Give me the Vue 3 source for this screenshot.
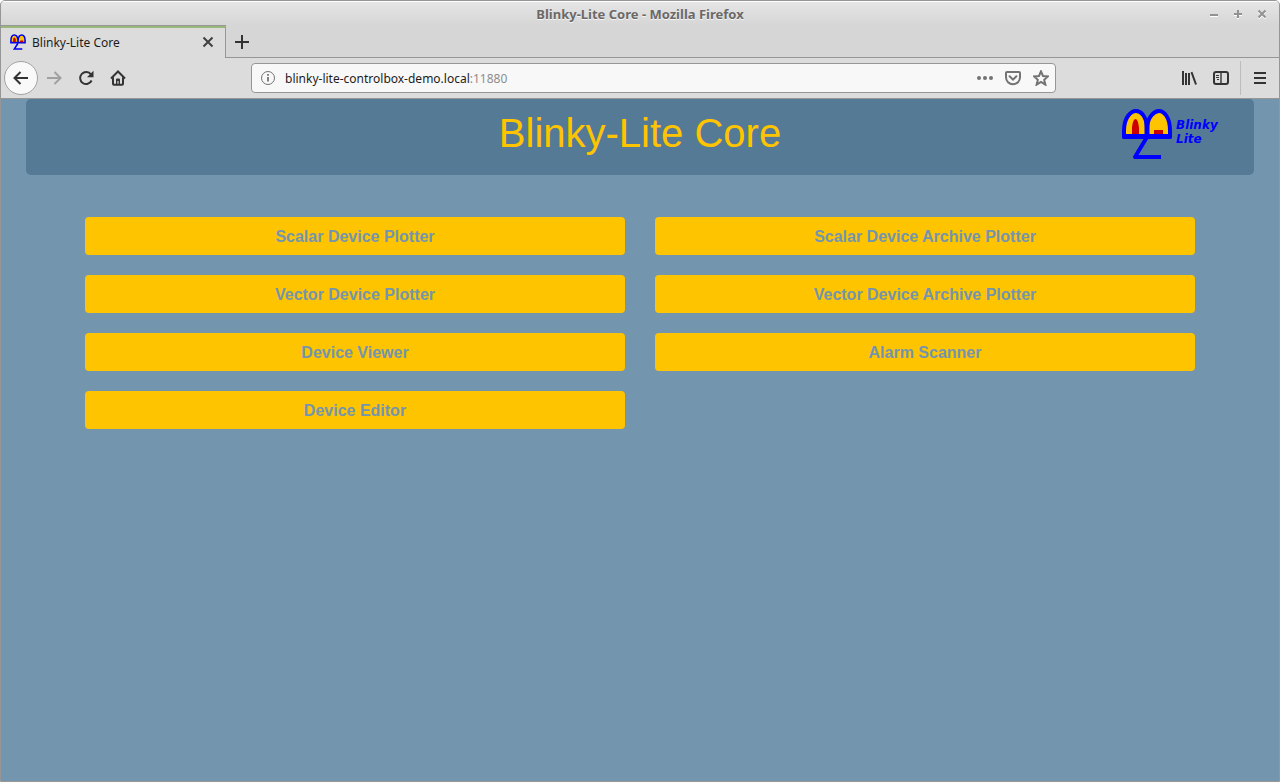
<script setup>
const tools = [
  'Scalar Device Plotter',
  'Scalar Device Archive Plotter',
  'Vector Device Plotter',
  'Vector Device Archive Plotter',
  'Device Viewer',
  'Alarm Scanner',
  'Device Editor',
]
</script>

<template>
  <div class="window">
    <div class="frame-top">
      <header class="titlebar">
        <span class="title">Blinky-Lite Core - Mozilla Firefox</span>
        <div class="window-controls">
          <button aria-label="Minimize"><svg width="10" height="10" viewBox="0 0 10 10"><path d="M1 6h8" /></svg></button>
          <button aria-label="Maximize"><svg width="10" height="10" viewBox="0 0 10 10"><path d="M1 5h8M5 1v8" /></svg></button>
          <button aria-label="Close window"><svg width="10" height="10" viewBox="0 0 10 10"><path d="M1.500 1.500l7 7M8.500 1.500l-7 7" /></svg></button>
        </div>
      </header>
      <div class="tabs">
        <div class="tab">
          <svg class="favicon" width="16" height="16" viewBox="0 0 52 52">
            <path d="M3 28V22C3 8 9 3 14 3s11 5 12 18C27 8 33 3 38 3s11 6 11 19v6z" fill="#ffc400" stroke="#0000f0" stroke-width="5" />
            <path d="M26 14v14" stroke="#0000f0" stroke-width="5" />
            <path d="M10 27v-8c1-10 8-10 9 0v8zM33 21h10v6H33z" fill="#cc0000" stroke="none" />
            <path d="M26 30L14 49h26" fill="none" stroke="#0000f0" stroke-width="5" />
          </svg>
          <span class="tab-name">Blinky-Lite Core</span>
          <button class="tab-close" aria-label="Close tab"><svg width="12" height="12" viewBox="0 0 12 12"><path d="M1.500 1.500l9 9M10.500 1.500l-9 9" /></svg></button>
        </div>
        <div class="tab-rest">
          <button class="new-tab" aria-label="New tab"><svg width="16" height="16" viewBox="0 0 16 16"><path d="M8 1v14M1 8h14" /></svg></button>
        </div>
      </div>
    </div>

    <nav class="toolbar">
      <div class="nav-left">
        <button class="back" aria-label="Back"><svg width="16" height="16" viewBox="0 0 16 16"><path d="M15 8H2M7.500 2L1.500 8l6 6" /></svg></button>
        <button class="forward" aria-label="Forward"><svg width="16" height="16" viewBox="0 0 16 16"><path d="M1 8h13M8.500 2l6 6-6 6" /></svg></button>
        <button aria-label="Reload"><svg width="16" height="16" viewBox="0 0 16 16"><path d="M13 4.500A6 6 0 1 0 13.600 10.500" /><path d="M15.500 0.800v6.400H9z" fill="#333" stroke="none" /></svg></button>
        <button aria-label="Home"><svg width="16" height="16" viewBox="0 0 16 16"><path d="M1 8.500L8 1.500l7 7M3 7.500v6.200a1 1 0 0 0 1 1h8a1 1 0 0 0 1-1V7.500" /><path d="M6 14V9.500q0-1 1-1h2q1 0 1 1V14H8.600v-3H7.400v3z" fill="#333" stroke="none" /></svg></button>
      </div>
      <div class="url">
        <svg class="info" width="16" height="16" viewBox="0 0 16 16"><circle cx="8" cy="8" r="6.500" /><path d="M8 7v4.500M8 4v1.800" stroke-width="1.800" /></svg>
        <span class="address">blinky-lite-controlbox-demo.local<span class="port">:11880</span></span>
        <div class="url-actions">
          <button aria-label="Page actions"><svg width="16" height="16" viewBox="0 0 16 16"><g fill="#737373" stroke="none"><circle cx="2" cy="8" r="2" /><circle cx="8" cy="8" r="2" /><circle cx="14" cy="8" r="2" /></g></svg></button>
          <button aria-label="Save to Pocket"><svg width="16" height="16" viewBox="0 0 16 16"><path d="M2 1.900h12a1 1 0 0 1 1 1V7.300a7 7 0 0 1-14 0V2.900a1 1 0 0 1 1-1zM4.600 6.300L8 9.600l3.400-3.300" stroke-linecap="round" /></svg></button>
          <button aria-label="Bookmark"><svg width="16" height="16" viewBox="0 0 16 16"><path d="M8 1.300l2 4.700 5 .4-3.800 3.400 1.200 4.900L8 12l-4.400 2.700 1.200-4.900L1 6.400 6 6z" /></svg></button>
        </div>
      </div>
      <div class="nav-right">
        <button aria-label="Library"><svg width="16" height="16" viewBox="0 0 16 16"><path d="M2 1v14M5 3v12M8 3v12" /><path d="M10.500 2.200L15 14.500" /></svg></button>
        <button aria-label="Sidebars"><svg width="16" height="16" viewBox="0 0 16 16"><rect x="1" y="2" width="14" height="12" rx="2" /><path d="M8 2v12" stroke-width="1.400" /><path d="M3 5.500h3M3 7.500h3M4 9.500h2" stroke-width="1" /></svg></button>
        <div class="menu-wrap">
          <button aria-label="Menu"><svg width="14" height="16" viewBox="0 0 14 16"><path d="M1 3h12M1 8h12M1 13h12" /></svg></button>
        </div>
      </div>
    </nav>

    <main class="page">
      <div class="banner">
        <h1>Blinky-Lite Core</h1>
        <svg class="logo" width="100" height="52" viewBox="0 0 100 52" role="img" aria-label="Blinky Lite">
          <path d="M2 28V22C2 8 9 2 14 2s10 5 11 16C26 8 32 2 37 2s11 6 11 20v6z" fill="#ffc400" stroke="#0000ff" stroke-width="4" stroke-linejoin="round" />
          <path d="M25 13v14" stroke="#0000ff" stroke-width="5" />
          <path d="M10 25V19C11 7 16 7 17 19v6zM32 21h9v4h-9z" fill="#cc0000" stroke="none" />
          <path d="M2.500 27.500h45" stroke="#0000ff" stroke-width="5" stroke-linecap="round" />
          <path d="M25 28L13 48h26" fill="none" stroke="#0000ff" stroke-width="4" stroke-linejoin="round" />
          <text x="54" y="20">Blinky</text>
          <text x="54" y="34">Lite</text>
        </svg>
      </div>
      <div class="tools">
        <button v-for="tool in tools" :key="tool">{{ tool }}</button>
      </div>
    </main>
  </div>
</template>

<style>
body {
  margin: 0;
}
</style>

<style scoped>
* {
  box-sizing: border-box;
}
.window {
  min-height: 100vh;
  display: flex;
  flex-direction: column;
  border: 1px solid #969696;
  border-radius: 5px 5px 0 0;
  overflow: hidden;
  background: #7395ae;
  font-family: "Noto Sans", sans-serif;
  font-size: 12px;
  color: #1c1c1c;
}
button {
  display: flex;
  align-items: center;
  justify-content: center;
  padding: 0;
  border: 0;
  background: none;
}
svg {
  display: block;
  fill: none;
  stroke: #333;
  stroke-width: 2;
}
.frame-top {
  background: linear-gradient(#e6e6e6, #d6d6d6 24px);
  box-shadow: inset 0 1px #fff;
}
.titlebar {
  height: 25px;
  display: grid;
  grid-template-columns: 1fr auto 1fr;
  align-items: center;
  padding: 1px 12px 0;
}
.title {
  grid-column: 2;
  font-size: 13px;
  font-weight: 700;
  line-height: 20px;
  color: #6b6868;
  text-shadow: 0 1px #f5f5f5;
}
.window-controls {
  justify-self: end;
  display: flex;
  gap: 14px;
}
.window-controls svg {
  stroke: #929292;
  filter: drop-shadow(0 1px #fff);
}
.tabs {
  display: flex;
  height: 32px;
}
.tab {
  width: 225px;
  display: flex;
  align-items: center;
  padding: 0 11px 2px 9px;
  background: #dcdcdc;
  border-top: 2px solid #9ab87c;
  border-right: 1px solid #969696;
  box-shadow: 0 -1px #969696;
}
.favicon {
  margin-right: 6px;
}
.tab-close {
  margin-left: auto;
}
.tab-close svg {
  stroke: #404040;
}
.tab-rest {
  flex: 1;
  display: flex;
  border-bottom: 1px solid #969696;
}
.new-tab {
  width: 32px;
}
.toolbar {
  height: 41px;
  display: grid;
  grid-template-columns: 250px minmax(0, 805px) 1fr;
  align-items: center;
  background: #dcdcdc;
  border-bottom: 1px solid #969696;
}
.nav-left {
  display: flex;
  align-items: center;
  padding-left: 3px;
}
.nav-left button {
  width: 32px;
  height: 34px;
}
.nav-left .back {
  width: 34px;
  border: 1px solid #a2a2a2;
  border-radius: 50%;
  background: #f9f9f9;
}
.forward svg {
  stroke: #a0a0a0;
}
.url {
  height: 30px;
  display: flex;
  align-items: center;
  padding: 0 6px 0 8px;
  border: 1px solid #969696;
  border-radius: 4px;
  background: #f8f8f8;
}
.url svg {
  stroke: #737373;
}
.url .info {
  stroke-width: 1;
}
.address {
  margin-left: 9px;
}
.port {
  color: #8c8c8c;
}
.url-actions {
  margin-left: auto;
  display: flex;
  gap: 12px;
}
.nav-right {
  display: flex;
  justify-content: flex-end;
  align-items: center;
  gap: 16px;
}
.menu-wrap {
  display: flex;
  align-items: center;
  height: 34px;
  padding: 0 12px;
  margin-left: -5px;
  border-left: 1px solid #bdbdbd;
}
.page {
  flex: 1;
  font-family: "Liberation Sans", Arial, sans-serif;
}
.banner {
  position: relative;
  height: 76px;
  margin: 0 25px;
  padding-top: 10px;
  border-radius: 5px;
  background: #557a95;
}
h1 {
  margin: 0;
  font-size: 40px;
  font-weight: 400;
  line-height: 48px;
  text-align: center;
  color: #ffc400;
}
.logo {
  position: absolute;
  top: 10px;
  right: 32px;
}
.logo text {
  font: italic 700 12px "DejaVu Sans", sans-serif;
  fill: #0000ff;
  stroke: none;
}
.tools {
  max-width: 1140px;
  margin: 42px auto 0;
  padding: 0 15px;
  display: grid;
  grid-template-columns: 1fr 1fr;
  gap: 20px 30px;
}
.tools button {
  height: 38px;
  padding-top: 2px;
  border-radius: 4px;
  background: #ffc400;
  color: #7395ae;
  font: 700 16px "Liberation Sans", Arial, sans-serif;
}
</style>
